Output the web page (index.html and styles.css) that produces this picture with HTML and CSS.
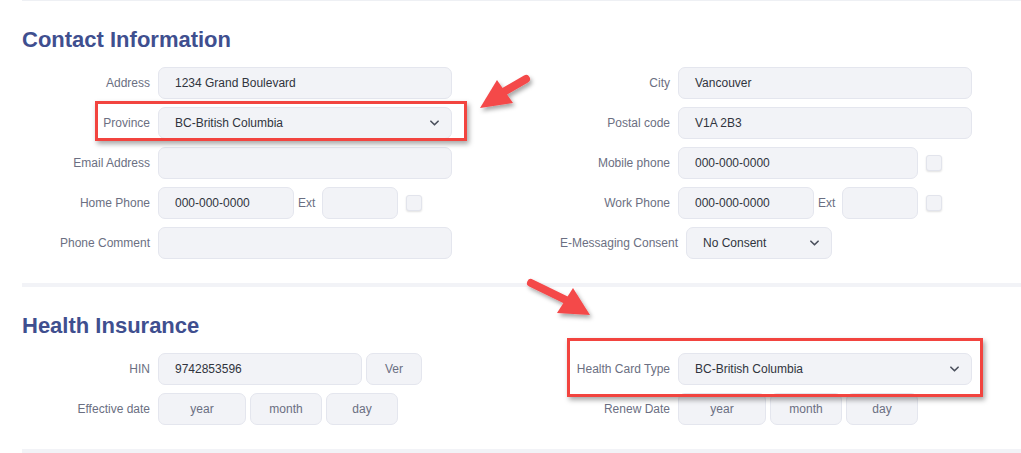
FILE: index.html
```html
<!DOCTYPE html>
<html>
<head>
<meta charset="utf-8">
<link rel="stylesheet" href="styles.css">
</head>
<body>
<div class="page">
  <section class="section section-first">
    <h2 class="title">Contact Information</h2>
    <div class="grid">
      <div class="cell"><label class="lbl">Address</label><div class="field w-full">1234 Grand Boulevard</div></div>
      <div class="cell"><label class="lbl">City</label><div class="field w-full">Vancouver</div></div>

      <div class="cell"><label class="lbl">Province</label><div class="field select w-full"><span>BC-British Columbia</span><svg class="chev" viewBox="0 0 10 6" width="9" height="6"><path d="M1 1l4 4 4-4" fill="none" stroke="#4a4f5c" stroke-width="1.8" stroke-linecap="round" stroke-linejoin="round"/></svg></div></div>
      <div class="cell"><label class="lbl">Postal code</label><div class="field w-full">V1A 2B3</div></div>

      <div class="cell"><label class="lbl">Email Address</label><div class="field w-full"></div></div>
      <div class="cell"><label class="lbl">Mobile phone</label><div class="field w-mobile">000-000-0000</div><span class="check"></span></div>

      <div class="cell"><label class="lbl">Home Phone</label><div class="field w-phone">000-000-0000</div><span class="ext">Ext</span><div class="field w-ext"></div><span class="check"></span></div>
      <div class="cell"><label class="lbl">Work Phone</label><div class="field w-phone">000-000-0000</div><span class="ext">Ext</span><div class="field w-ext"></div><span class="check"></span></div>

      <div class="cell"><label class="lbl">Phone Comment</label><div class="field w-full"></div></div>
      <div class="cell"><label class="lbl lbl-wide">E-Messaging Consent</label><div class="field select w-consent"><span>No Consent</span><svg class="chev" viewBox="0 0 10 6" width="9" height="6"><path d="M1 1l4 4 4-4" fill="none" stroke="#4a4f5c" stroke-width="1.8" stroke-linecap="round" stroke-linejoin="round"/></svg></div></div>
    </div>
  </section>

  <section class="section">
    <h2 class="title">Health Insurance</h2>
    <div class="grid">
      <div class="cell"><label class="lbl">HIN</label><div class="field w-hin">9742853596</div><div class="field center w-ver">Ver</div></div>
      <div class="cell"><label class="lbl">Health Card Type</label><div class="field select w-full"><span>BC-British Columbia</span><svg class="chev" viewBox="0 0 10 6" width="9" height="6"><path d="M1 1l4 4 4-4" fill="none" stroke="#4a4f5c" stroke-width="1.8" stroke-linecap="round" stroke-linejoin="round"/></svg></div></div>

      <div class="cell"><label class="lbl">Effective date</label><div class="field center w-year">year</div><div class="field center w-md">month</div><div class="field center w-md">day</div></div>
      <div class="cell"><label class="lbl">Renew Date</label><div class="field center w-year">year</div><div class="field center w-md">month</div><div class="field center w-md">day</div></div>
    </div>
  </section>
  <div class="sep"></div>
</div>

<div class="mark mark-province"></div>
<div class="mark mark-card"></div>

<svg class="arrows" width="1021" height="453" viewBox="0 0 1021 453">
  <defs>
    <filter id="sh" x="-20%" y="-20%" width="150%" height="150%">
      <feDropShadow dx="2" dy="3" stdDeviation="2" flood-color="#000" flood-opacity="0.35"/>
    </filter>
  </defs>
  <g filter="url(#sh)" fill="#f4484a">
    <line x1="526" y1="79" x2="500" y2="94" stroke="#f4484a" stroke-width="8" stroke-linecap="round"/>
    <polygon points="480,108 497,80 513,103"/>
    <line x1="531" y1="283" x2="568" y2="301" stroke="#f4484a" stroke-width="8" stroke-linecap="round"/>
    <polygon points="590,315 573,288 557,313"/>
  </g>
</svg>
</body>
</html>
```
FILE: styles.css
```css
html, body {
  margin: 0;
  padding: 0;
  background: #ffffff;
}
body {
  font-family: "Liberation Sans", Arial, sans-serif;
  width: 1021px;
  height: 453px;
  overflow: hidden;
  position: relative;
}
.page {
  padding-left: 22px;
}
.section {
  border-top: 4px solid #f2f3f7;
  padding: 26px 0 24px 0;
}
.section-first {
  border-top: 1px solid #eef0f4;
}
.sep {
  height: 4px;
  background: #f2f3f7;
}
.title {
  margin: 0 0 14px 0;
  font-size: 22px;
  line-height: 26px;
  font-weight: bold;
  color: #3f4f8f;
}
.grid {
  display: grid;
  grid-template-columns: 430px 430px;
  column-gap: 90px;
  row-gap: 8px;
}
.cell {
  display: flex;
  align-items: center;
  height: 32px;
}
.lbl {
  width: 128px;
  flex: 0 0 128px;
  text-align: right;
  margin-right: 8px;
  font-size: 12px;
  color: #6b6f82;
  white-space: nowrap;
}
.lbl-wide {
  width: 136px;
  flex: 0 0 136px;
}
.field {
  box-sizing: border-box;
  height: 32px;
  line-height: 30px;
  background: #f2f3f7;
  border: 1px solid #e4e6ee;
  border-radius: 7px;
  padding: 0 12px 0 16px;
  font-size: 12px;
  color: #30343d;
  white-space: nowrap;
  flex: 0 0 auto;
}
.field + .field {
  margin-left: 4px;
}
.select {
  display: flex;
  align-items: center;
  justify-content: space-between;
}
.chev {
  display: block;
}
.center {
  padding: 0;
  text-align: center;
  color: #6b6f82;
}
.w-full { width: 294px; }
.w-mobile { width: 240px; }
.w-phone { width: 136px; }
.w-ext { width: 76px; margin-left: 0; }
.w-consent { width: 146px; }
.w-hin { width: 204px; }
.w-ver { width: 56px; }
.w-year { width: 88px; }
.w-md { width: 72px; }
.ext {
  font-size: 12px;
  color: #6b6f82;
  margin: 0 7px 0 4px;
}
.check {
  box-sizing: border-box;
  width: 16px;
  height: 16px;
  margin-left: 8px;
  background: #f2f3f7;
  border: 1px solid #e2e4ec;
  border-radius: 3px;
  box-shadow: 0 1px 2px rgba(0, 0, 0, 0.12);
  flex: 0 0 auto;
}
.mark {
  position: absolute;
  box-sizing: border-box;
  border: 3px solid #f2443f;
  box-shadow: 2px 3px 5px rgba(0, 0, 0, 0.35);
}
.mark-province {
  left: 95px;
  top: 101px;
  width: 372px;
  height: 40px;
}
.mark-card {
  left: 567px;
  top: 338px;
  width: 416px;
  height: 59px;
}
.arrows {
  position: absolute;
  left: 0;
  top: 0;
  pointer-events: none;
}
```
